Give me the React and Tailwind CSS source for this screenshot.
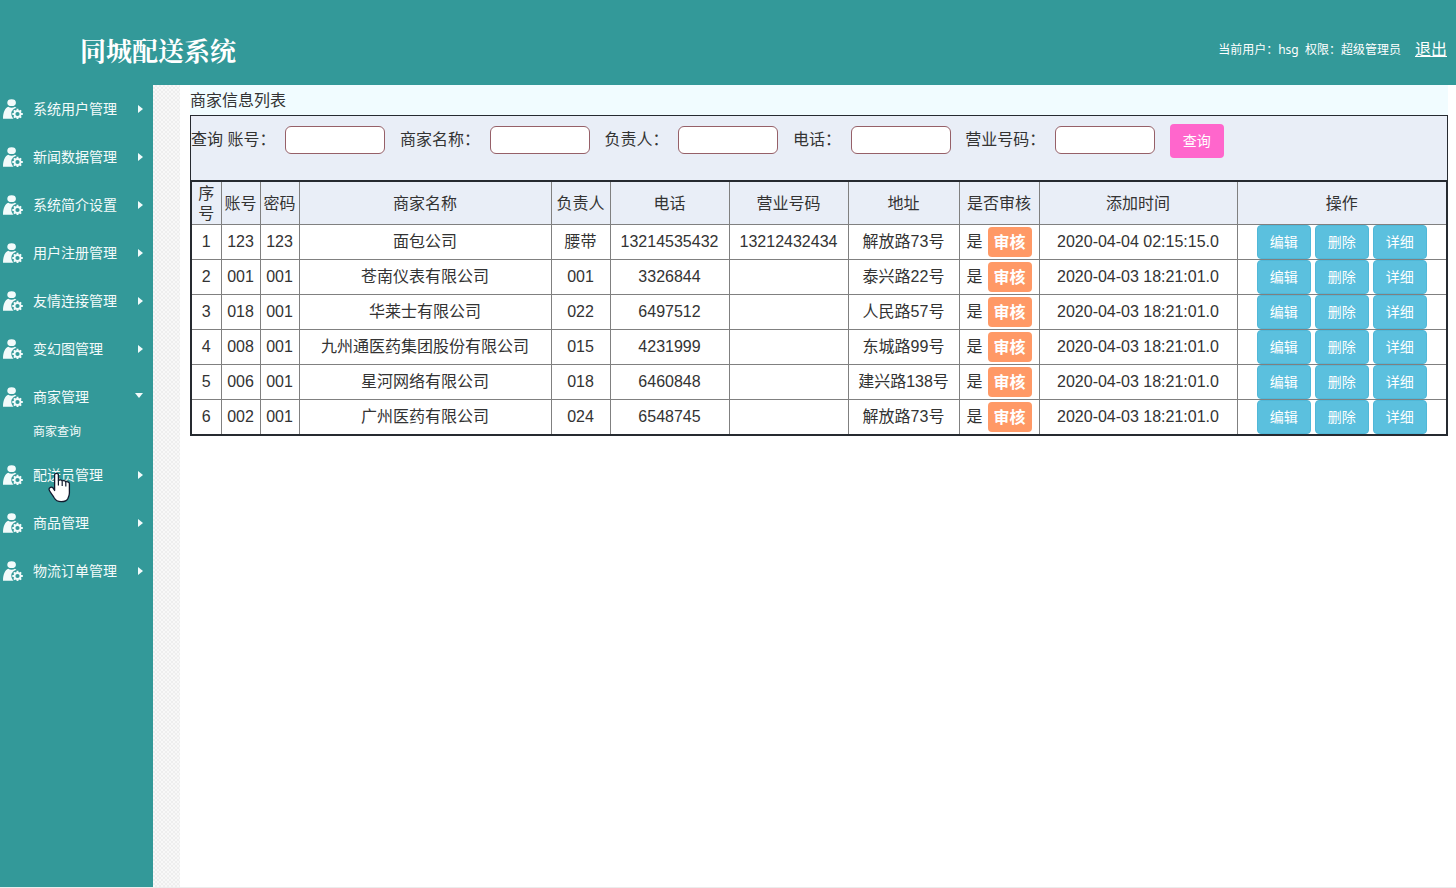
import React from "react";

const MENU = [
  { label: "系统用户管理" },
  { label: "新闻数据管理" },
  { label: "系统简介设置" },
  { label: "用户注册管理" },
  { label: "友情连接管理" },
  { label: "变幻图管理" },
  { label: "商家管理", open: true, children: ["商家查询"] },
  { label: "配送员管理", pointer: true },
  { label: "商品管理" },
  { label: "物流订单管理" },
];

const FIELDS = [
  { id: "account", label: "账号：" },
  { id: "name", label: "商家名称：" },
  { id: "owner", label: "负责人：" },
  { id: "phone", label: "电话：" },
  { id: "license", label: "营业号码：" },
];

const COLUMNS = [
  { title: "序号", width: "w-[30px]" },
  { title: "账号", width: "w-[39px]" },
  { title: "密码", width: "w-[39px]" },
  { title: "商家名称", width: "w-[252px]" },
  { title: "负责人", width: "w-[59px]" },
  { title: "电话", width: "w-[119px]" },
  { title: "营业号码", width: "w-[119px]" },
  { title: "地址", width: "w-[111px]" },
  { title: "是否审核", width: "w-[80px]" },
  { title: "添加时间", width: "w-[198px]" },
  { title: "操作", width: "w-[210px]" },
];

const ROWS = [
  ["1", "123", "123", "面包公司", "腰带", "13214535432", "13212432434", "解放路73号", "是", "2020-04-04 02:15:15.0"],
  ["2", "001", "001", "苍南仪表有限公司", "001", "3326844", "", "泰兴路22号", "是", "2020-04-03 18:21:01.0"],
  ["3", "018", "001", "华莱士有限公司", "022", "6497512", "", "人民路57号", "是", "2020-04-03 18:21:01.0"],
  ["4", "008", "001", "九州通医药集团股份有限公司", "015", "4231999", "", "东城路99号", "是", "2020-04-03 18:21:01.0"],
  ["5", "006", "001", "星河网络有限公司", "018", "6460848", "", "建兴路138号", "是", "2020-04-03 18:21:01.0"],
  ["6", "002", "001", "广州医药有限公司", "024", "6548745", "", "解放路73号", "是", "2020-04-03 18:21:01.0"],
];

function UserGearIcon() {
  return (
    <svg className="size-5 shrink-0" viewBox="0 0 20 20" fill="#f3fbfb" aria-hidden="true">
      <ellipse cx="8.6" cy="3.700" rx="4.300" ry="3.400" />
      <path d="M0 19.700C0 12.500 2.500 8.800 5.200 7.800c2 1.200 4.800 1.200 6.800 0 1.200.7 2 1.700 2.400 3V19.700Z" />
      <circle cx="14.500" cy="15" r="6.200" fill="#339999" />
      <circle cx="14.500" cy="15" r="3" fill="none" stroke="#f3fbfb" strokeWidth="1.800" />
      <g stroke="#f3fbfb" strokeWidth="1.900">
        <path d="M14.500 9.800v1.800M14.500 18.400v1.700M9.300 15h1.800M17.900 15h1.900M10.900 11.400l1.200 1.200M16.900 17.400l1.200 1.200M10.900 18.600l1.200-1.200M16.900 12.600l1.200-1.200" />
      </g>
    </svg>
  );
}

function Arrow({ open }) {
  return open ? (
    <svg className="mb-1 h-[5px] w-2" viewBox="0 0 8 5" fill="#f3fbfb" aria-hidden="true">
      <path d="M0 0h8L4 5Z" />
    </svg>
  ) : (
    <svg className="h-2 w-[5px]" viewBox="0 0 5 8" fill="#f3fbfb" aria-hidden="true">
      <path d="M0 0v8l5-4Z" />
    </svg>
  );
}

function HandPointer() {
  return (
    <svg className="pointer-events-none absolute left-12 top-[21px] h-[31px] w-[23px]" viewBox="0 0 23 31" aria-hidden="true">
      <path
        d="M6.600 18.500V3C6.600 .8 10.400.8 10.400 3V8.500c.6-.8 3.400-.8 3.800.5.8-.7 3-.5 3.500.8.9-.5 3.500-.1 3.700 1.700V21c0 2.500-.9 3.800-1.500 5.500-.8 2-2.800 3.200-6.700 3.200-3.900 0-5.600-1.300-7.200-4.200C4.500 22.500 1 19.500 1 17.300c0-2 2.600-2.800 4-1.500Z"
        fill="#fff"
        stroke="#111a2e"
        strokeWidth="1.300"
        strokeLinejoin="round"
      />
      <path d="M10.400 8.500v5M14.200 9.200v4.800M17.800 10v4.500" stroke="#111a2e" strokeWidth="1.200" />
    </svg>
  );
}

function Header() {
  return (
    <header className="flex h-[85px] items-center justify-between bg-[#339999] pl-20 pr-[9px] text-white">
      <h1 className="pt-5 font-['Liberation_Serif','Noto_Serif_CJK_SC','Noto_Sans_CJK_SC',serif] text-[26px] font-bold leading-8">
        同城配送系统
      </h1>
      <div className="flex items-center gap-[14px] pt-[14px]">
        <span className="whitespace-pre font-['Noto_Sans','Noto_Sans_CJK_SC',sans-serif] text-xs">
          当前用户：hsg  权限：超级管理员
        </span>
        <a href="#logout" className="text-base underline">
          退出
        </a>
      </div>
    </header>
  );
}

function Sidebar() {
  return (
    <nav className="w-[153px] shrink-0 bg-[#339999] text-[#f3fbfb]">
      <ul>
        {MENU.map((item) => (
          <li key={item.label} className="relative">
            <button
              type="button"
              aria-expanded={Boolean(item.open)}
              className="flex h-12 w-full cursor-pointer items-center pl-[3px] pr-[10px] text-sm"
            >
              <UserGearIcon />
              <span className="ml-[10px] flex-1 text-left">{item.label}</span>
              <Arrow open={item.open} />
            </button>
            {item.pointer && <HandPointer />}
            {item.children && (
              <ul className="h-[30px] pl-[33px]">
                {item.children.map((child) => (
                  <li key={child}>
                    <a href="#merchant-query" className="block text-xs leading-[22px]">
                      {child}
                    </a>
                  </li>
                ))}
              </ul>
            )}
          </li>
        ))}
      </ul>
    </nav>
  );
}

function SearchBar() {
  return (
    <form
      className="h-[65px] border border-b-0 border-[#262a30] bg-[#e9eef7] pt-2"
      onSubmit={(event) => event.preventDefault()}
    >
      查询{" "}
      {FIELDS.map((field) => (
        <React.Fragment key={field.id}>
          <label htmlFor={field.id}>{field.label}</label>
          <input
            id={field.id}
            type="text"
            className="mx-[10px] mb-[2px] h-7 w-[100px] rounded-md border border-[#966068] bg-white px-2 align-middle text-sm"
          />{" "}
        </React.Fragment>
      ))}
      <button type="submit" className="h-[34px] w-[54px] rounded bg-[#ff66cc] align-middle text-sm text-white">
        查询
      </button>
    </form>
  );
}

function MerchantTable() {
  return (
    <table className="w-full table-fixed border-collapse border-2 border-[#262a30] text-center">
      <thead className="bg-[#e9eef7]">
        <tr className="h-[43px]">
          {COLUMNS.map((column) => (
            <th key={column.title} scope="col" className={`${column.width} border border-[#808080] px-0 pb-0 pt-[2px] font-normal leading-5`}>
              {column.title === "序号" ? <span className="inline-block w-4 align-middle">序号</span> : column.title}
            </th>
          ))}
        </tr>
      </thead>
      <tbody>
        {ROWS.map((row) => (
          <tr key={row[0]} className="h-[35px]">
            {row.map((value, index) => (
              <td key={index} className="whitespace-nowrap border border-[#808080] p-0 leading-5">
                {index === 8 ? (
                  <div className="flex items-center justify-center gap-[5px]">
                    {value}
                    <button type="button" className="h-[30px] w-11 rounded bg-[#ff9966] pt-[2px] font-bold text-white">
                      审核
                    </button>
                  </div>
                ) : (
                  value
                )}
              </td>
            ))}
            <td className="border border-[#808080] p-0">
              <div className="flex justify-center gap-1">
                {["编辑", "删除", "详细"].map((action) => (
                  <button
                    key={action}
                    type="button"
                    className="h-[34px] w-[54px] rounded border border-[#50b8d8] bg-[#5bc0de] text-sm text-white"
                  >
                    {action}
                  </button>
                ))}
              </div>
            </td>
          </tr>
        ))}
      </tbody>
    </table>
  );
}

export default function App() {
  return (
    <div className="flex min-h-screen flex-col border-b border-[#ececec] bg-white font-['Liberation_Sans','Noto_Sans_CJK_SC',sans-serif] text-base text-[#333]">
      <Header />
      <div className="flex flex-1">
        <Sidebar />
        <div className="w-[27px] shrink-0 bg-[#f8f8f8] bg-[conic-gradient(#eeeeee_25%,transparent_25%_50%,#eeeeee_50%_75%,transparent_75%)] bg-[length:4px_4px]" />
        <main className="min-w-0 flex-1 pl-[10px] pr-2">
          <h2 className="bg-[#f1fcff] pt-[2px] leading-[28px]">商家信息列表</h2>
          <SearchBar />
          <MerchantTable />
        </main>
      </div>
    </div>
  );
}
